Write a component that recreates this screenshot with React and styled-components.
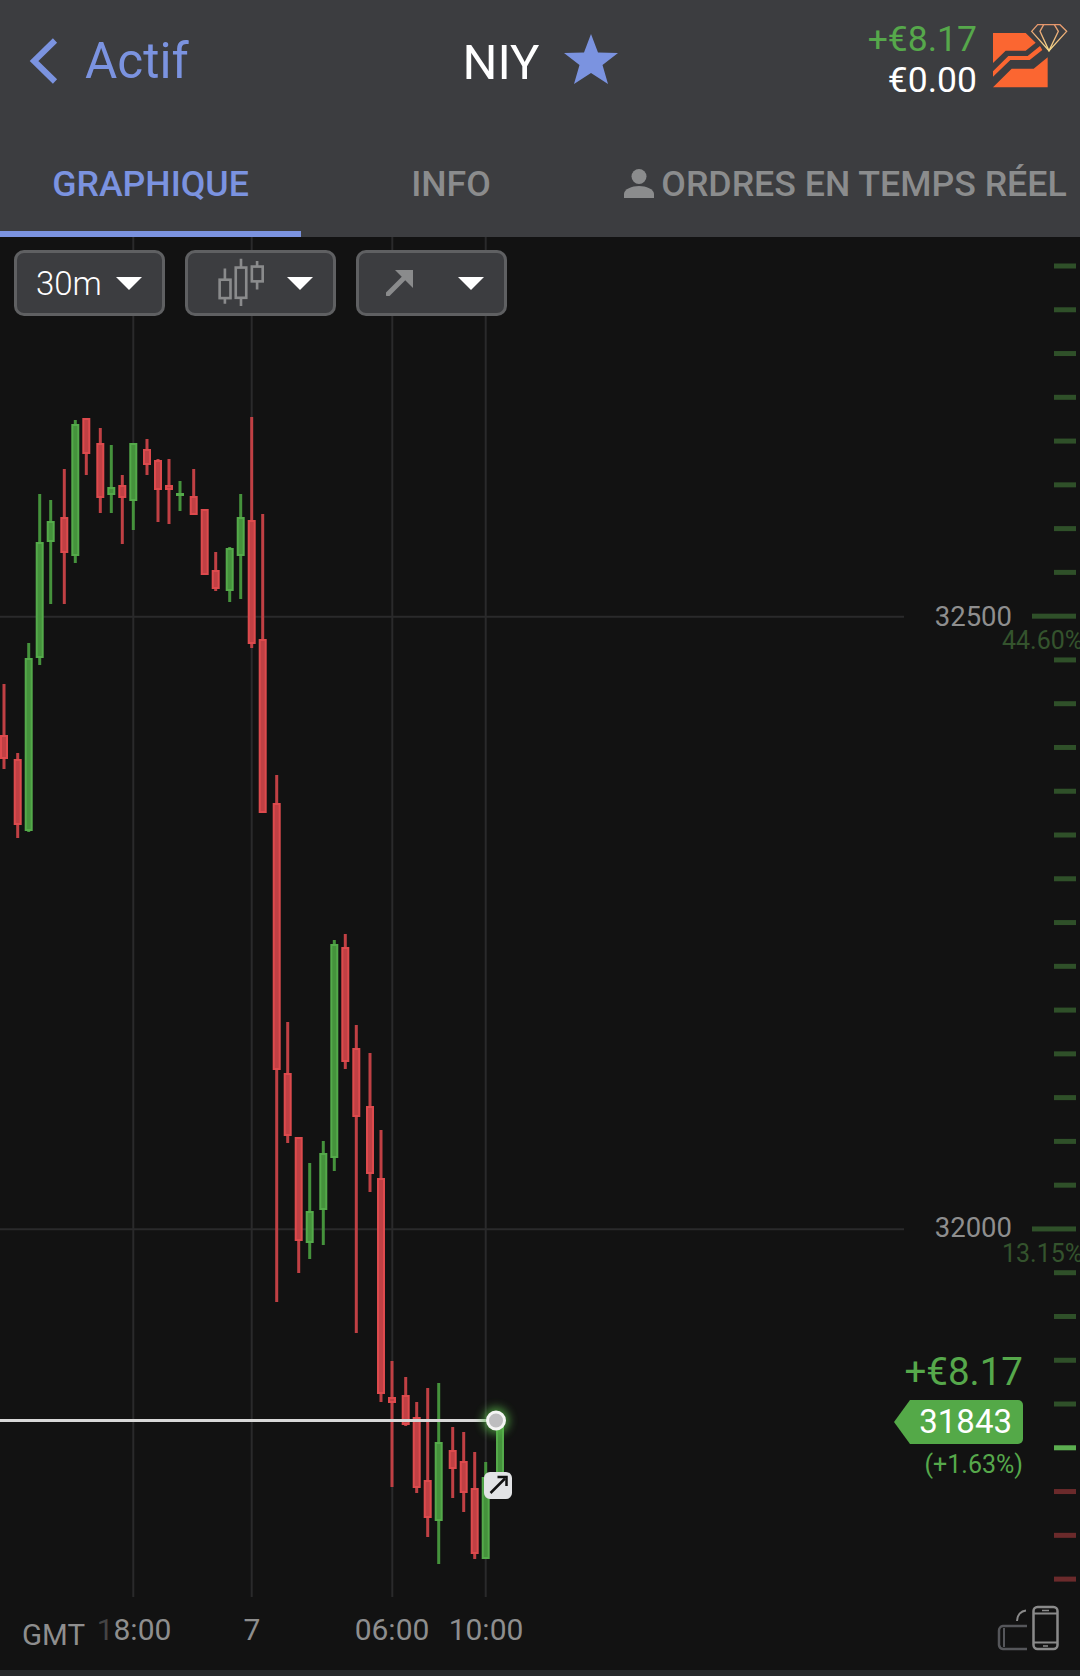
import styled, { createGlobalStyle } from "styled-components";

const CHART_TOP = 237;
const UP = { edge: "#54aa4a", fill: "#45923c" };
const DOWN = { edge: "#dd4a4d", fill: "#c04044" };

// x, wick top, wick bottom, body top, body bottom, up?
const CANDLES = [
  [4, 684, 769, 735, 759, 0],
  [17.7, 753, 838, 759, 825, 0],
  [28.7, 643, 832, 658, 831, 1],
  [39.7, 494, 665, 542, 658, 1],
  [50.7, 500, 604, 521, 542, 1],
  [64.3, 469, 604, 517, 553, 0],
  [75.3, 420, 563, 424, 556, 1],
  [86.3, 418, 475, 418, 454, 0],
  [100.3, 428, 513, 443, 498, 0],
  [111.3, 445, 513, 487, 495, 1],
  [122.3, 475, 544, 485, 498, 0],
  [133.3, 443, 530, 443, 501, 1],
  [147, 439, 475, 449, 465, 0],
  [158, 459, 522, 460, 490, 0],
  [169, 459, 524, 485, 490, 0],
  [180, 481, 511, 493, 496, 1],
  [193.7, 469, 515, 496, 515, 0],
  [204.7, 509, 575, 509, 575, 0],
  [215.7, 552, 591, 570, 589, 0],
  [229.7, 547, 602, 548, 591, 1],
  [240.7, 494, 599, 517, 556, 1],
  [251.7, 417, 648, 520, 644, 0],
  [262.7, 514, 813, 639, 813, 0],
  [276.7, 775, 1302, 803, 1070, 0],
  [287.7, 1022, 1143, 1073, 1136, 0],
  [298.7, 1137, 1273, 1137, 1241, 0],
  [309.7, 1163, 1259, 1211, 1243, 1],
  [323.3, 1141, 1245, 1153, 1210, 1],
  [334.3, 940, 1171, 944, 1158, 1],
  [345.3, 934, 1069, 947, 1062, 0],
  [356.3, 1025, 1333, 1048, 1117, 0],
  [370, 1053, 1192, 1106, 1174, 0],
  [381, 1130, 1402, 1178, 1394, 0],
  [392, 1361, 1487, 1397, 1403, 0],
  [405.7, 1377, 1426, 1395, 1425, 0],
  [416.7, 1402, 1493, 1417, 1488, 0],
  [427.7, 1388, 1537, 1480, 1518, 0],
  [438.7, 1383, 1564, 1442, 1521, 1],
  [452.7, 1427, 1498, 1450, 1469, 0],
  [463.7, 1432, 1512, 1461, 1493, 0],
  [474.7, 1452, 1559, 1488, 1554, 0],
  [485.7, 1462, 1559, 1477, 1559, 1],
  [500, 1420, 1480, 1420, 1480, 1],
];

const GRID_X = [133.3, 251.7, 392.3, 485.7];
const GRID_Y = [616.7, 1229.3];
const TICKS = Array.from({ length: 31 }, (_, i) => i);

const tickColor = (i) => {
  if (i === 27) return "#5cae50";
  return i > 27 ? "#6b2a2b" : "#2f5029";
};

const GlobalStyle = createGlobalStyle`
  html, body {
    margin: 0;
    padding: 0;
    background: #121212;
  }
  body {
    font-family: "Roboto", "Liberation Sans", sans-serif;
  }
`;

const Page = styled.div`
  width: 1080px;
  height: 1676px;
  display: flex;
  flex-direction: column;
  overflow: hidden;
`;

const TopBar = styled.header`
  height: 130px;
  box-sizing: border-box;
  padding-bottom: 8px;
  display: grid;
  grid-template-columns: 1fr auto 1fr;
  align-items: center;
  background: #3c3d40;
`;

const BackLink = styled.div`
  display: flex;
  align-items: center;
  gap: 27px;
  padding-left: 28px;
  font-size: 49.5px;
  color: #7b93e0;
`;

const Title = styled.div`
  display: flex;
  align-items: center;
  gap: 24px;
  padding-top: 2px;
  font-size: 49px;
  color: #fff;

  svg {
    margin-top: -6px;
  }
`;

const Account = styled.div`
  display: flex;
  justify-content: flex-end;
  align-items: center;
  gap: 8px;
  padding: 0 5px 10px 0;
`;

const Balances = styled.div`
  display: flex;
  flex-direction: column;
  align-items: flex-end;
  margin-top: 8px;
  font-size: 35.5px;
  line-height: 41.5px;
`;

const Balance = styled.span`
  color: ${(p) => (p.$gain ? "#56a84b" : "#fff")};
`;

const Tabs = styled.nav`
  height: 107px;
  display: grid;
  grid-template-columns: 301px 300px 1fr;
  background: #3c3d40;
`;

const Tab = styled.div`
  display: flex;
  align-items: center;
  justify-content: center;
  gap: 7px;
  box-sizing: border-box;
  padding-top: 6px;
  padding-left: ${(p) => (p.$pad ? "10px" : "0")};
  font-size: 35.7px;
  font-weight: 500;
  white-space: nowrap;
  color: ${(p) => (p.$active ? "#7b93e0" : "#8b8c8d")};
  border-bottom: 6px solid ${(p) => (p.$active ? "#7b93e0" : "transparent")};
`;

const Chart = styled.main`
  position: relative;
  flex: 1;
  overflow: hidden;
  background: #121212;
`;

const Plot = styled.svg`
  position: absolute;
  top: 0;
  left: 0;
  display: block;
`;

const Toolbar = styled.div`
  position: relative;
  display: flex;
  gap: 20px;
  padding: 13px 0 0 14px;
`;

const Picker = styled.div`
  width: 151px;
  height: 66px;
  box-sizing: border-box;
  display: flex;
  align-items: center;
  justify-content: space-between;
  padding: 0 20px 0 ${(p) => p.$left}px;
  border: 3px solid #5f6062;
  border-radius: 10px;
  background: #3c3d40;
  font-size: 33px;
  font-weight: 300;
  color: #fff;
`;

const Caret = styled.span`
  width: 0;
  height: 0;
  border-left: 13px solid transparent;
  border-right: 13px solid transparent;
  border-top: 13px solid #fff;
`;

const AxisPrice = styled.span`
  position: absolute;
  right: 68px;
  top: ${(p) => p.$y - CHART_TOP}px;
  transform: translateY(-50%);
  font-size: 27.5px;
  color: #8e8e8e;
`;

const AxisPercent = styled.span`
  position: absolute;
  left: 1002px;
  top: ${(p) => p.$y - CHART_TOP}px;
  transform: translateY(-50%);
  font-size: 25px;
  white-space: nowrap;
  color: #34532d;
`;

const TimeLabel = styled.span`
  position: absolute;
  left: ${(p) => p.$x}px;
  top: ${1629 - CHART_TOP}px;
  transform: translate(-50%, -50%);
  font-size: 30px;
  color: #8e8e8e;
`;

const Faded = styled.span`
  color: #444;
`;

const Zone = styled.span`
  position: absolute;
  left: 22px;
  top: ${1635 - CHART_TOP}px;
  transform: translateY(-50%);
  font-size: 29.5px;
  color: #8e8e8e;
`;

const Position = styled.div`
  position: absolute;
  right: 57px;
  top: ${1349 - CHART_TOP}px;
  display: flex;
  flex-direction: column;
  align-items: flex-end;
`;

const Profit = styled.span`
  font-size: 38.5px;
  line-height: 46px;
  color: #56a84b;
`;

const PriceTag = styled.span`
  position: relative;
  width: 113px;
  height: 44px;
  margin-top: 5px;
  box-sizing: border-box;
  padding: 0 11px 2px 0;
  display: flex;
  align-items: center;
  justify-content: flex-end;
  border-radius: 0 5px 5px 0;
  background: #54a948;
  font-size: 33px;
  color: #fff;

  &::before {
    content: "";
    position: absolute;
    right: 100%;
    top: 0;
    border-top: 22px solid transparent;
    border-bottom: 22px solid transparent;
    border-right: 16px solid #54a948;
  }
`;

const Change = styled.span`
  margin-top: 4px;
  font-size: 25px;
  line-height: 34px;
  color: #56a84b;
`;

const RotateIcon = styled.svg`
  position: absolute;
  left: 996px;
  top: ${1604 - CHART_TOP}px;
`;

const BottomStrip = styled.div`
  height: 6px;
  background: #27292b;
`;

const Candle = ({ x, wickTop, wickBottom, bodyTop, bodyBottom, up }) => {
  const tone = up ? UP : DOWN;
  return (
    <g>
      <line x1={x} x2={x} y1={wickTop} y2={wickBottom} stroke={tone.fill} strokeWidth="3" />
      <rect
        x={x - 3}
        y={bodyTop + 1}
        width="6"
        height={Math.max(bodyBottom - bodyTop - 2, 1)}
        fill={tone.fill}
        stroke={tone.edge}
        strokeWidth="2"
      />
    </g>
  );
};

const ChartDrawing = () => (
  <Plot width="1080" height="1433" viewBox={`0 ${CHART_TOP} 1080 1433`}>
    <defs>
      <filter id="glow" x="-100%" y="-100%" width="300%" height="300%">
        <feGaussianBlur stdDeviation="5" />
      </filter>
    </defs>
    {GRID_X.map((x) => (
      <line key={x} x1={x} x2={x} y1={CHART_TOP} y2="1597" stroke="#2a2a2b" strokeWidth="2" />
    ))}
    {GRID_Y.map((y) => (
      <line key={y} x1="0" x2="904" y1={y} y2={y} stroke="#2a2a2b" strokeWidth="2" />
    ))}
    {TICKS.map((i) => {
      const y = 266 + i * 43.77;
      const long = i === 8 || i === 22;
      return (
        <rect key={i} x={long ? 1032 : 1054} y={y - 2.5} width={long ? 44 : 22} height="5" fill={tickColor(i)} />
      );
    })}
    {CANDLES.map(([x, wickTop, wickBottom, bodyTop, bodyBottom, up]) => (
      <Candle
        key={x}
        x={x}
        wickTop={wickTop}
        wickBottom={wickBottom}
        bodyTop={bodyTop}
        bodyBottom={bodyBottom}
        up={up}
      />
    ))}
    <line x1="0" x2="490" y1="1420.5" y2="1420.5" stroke="#d8d8d8" strokeWidth="3" />
    <circle cx="496" cy="1420.5" r="13" fill="#58b84a" opacity="0.75" filter="url(#glow)" />
    <circle cx="496" cy="1420.5" r="8.5" fill="#bdbdbf" stroke="#f4f4f4" strokeWidth="3" />
    <rect x="484" y="1472" width="28" height="27" rx="6" fill="#e2e3e5" />
    <path d="M490.5 1493L505 1478.5" stroke="#111" strokeWidth="2.5" fill="none" />
    <path d="M497.5 1477H506.5V1486" stroke="#111" strokeWidth="2.5" fill="none" />
  </Plot>
);

const BackIcon = () => (
  <svg width="30" height="46" viewBox="0 0 30 46">
    <path d="M27 2.5L6 23L27 43.5" fill="none" stroke="#7b93e0" strokeWidth="6" />
  </svg>
);

const StarIcon = () => (
  <svg width="54" height="50" viewBox="0 0 54 50">
    <path d="M27 0L34 18.5L54 19L38.5 31L44 50L27 39L10 50L15.5 31L0 19L20 18.5Z" fill="#7b93e0" />
  </svg>
);

const BrandLogo = () => (
  <svg width="90" height="76" viewBox="0 0 270 228">
    <defs>
      <linearGradient id="gem" x1="0" x2="0" y1="0" y2="1">
        <stop offset="0" stopColor="#e5966c" />
        <stop offset="1" stopColor="#f7dc8c" />
      </linearGradient>
    </defs>
    <path d="M24 45H122L152 74L122 98H62L24 135Z" fill="#fb6631" />
    <path d="M24 160L70 114H128L165 84L172 96L134 126H76L24 176Z" fill="#fb6631" />
    <path d="M24 208L80 152H146L188 118V208Z" fill="#fb6631" />
    <g fill="none" stroke="url(#gem)" strokeWidth="4">
      <path d="M140 40L158 20H225L245 40L192 98Z" />
      <path d="M140 40H245" />
      <path d="M176 20L165 40L192 98L220 40L208 20" />
    </g>
  </svg>
);

const PersonIcon = () => (
  <svg width="30" height="29" viewBox="0 0 30 29">
    <circle cx="15" cy="7.5" r="7.5" fill="#8b8c8d" />
    <path d="M0 29V25C0 20 8 17 15 17S30 20 30 25V29Z" fill="#8b8c8d" />
  </svg>
);

const CandlesIcon = () => (
  <svg width="46" height="50" viewBox="54 27 140 150">
    <g fill="none" stroke="#8a8b8c" strokeWidth="8">
      <path d="M75 58V92M75 148V165" />
      <rect x="59" y="92" width="33" height="56" />
      <path d="M124 28V55M124 147V172" />
      <rect x="108" y="55" width="32" height="92" />
      <path d="M173 35V52M173 97V122" />
      <rect x="157" y="52" width="33" height="45" />
    </g>
  </svg>
);

const ArrowIcon = () => (
  <svg width="27" height="26" viewBox="0 0 27 26">
    <path d="M2 24L21 5" stroke="#8a8b8c" strokeWidth="5" strokeLinecap="round" />
    <path d="M9 0H27V18Z" fill="#8a8b8c" />
  </svg>
);

const DevicesIcon = () => (
  <RotateIcon width="64" height="48" viewBox="0 0 64 48">
    <rect x="37.5" y="3" width="24" height="42" rx="4" fill="none" stroke="#8a8a8a" strokeWidth="2.5" />
    <path d="M38 9.5H61M38 38.5H61" stroke="#8a8a8a" strokeWidth="2" />
    <path d="M46 6.5H53M47 42H52" stroke="#8a8a8a" strokeWidth="1.5" />
    <path d="M31 22H7A4.5 4.5 0 0 0 3 26.5V41A4.5 4.5 0 0 0 7 45H31" fill="none" stroke="#55565a" strokeWidth="2.5" />
    <path d="M8 24V43" stroke="#55565a" strokeWidth="2" />
    <path d="M21 17C21 11 25 7 30 6.5" fill="none" stroke="#8a8a8a" strokeWidth="2" />
  </RotateIcon>
);

export default function App() {
  return (
    <Page>
      <GlobalStyle />
      <TopBar>
        <BackLink>
          <BackIcon />
          Actif
        </BackLink>
        <Title>
          NIY
          <StarIcon />
        </Title>
        <Account>
          <Balances>
            <Balance $gain>+€8.17</Balance>
            <Balance>€0.00</Balance>
          </Balances>
          <BrandLogo />
        </Account>
      </TopBar>
      <Tabs>
        <Tab $active>GRAPHIQUE</Tab>
        <Tab>INFO</Tab>
        <Tab $pad>
          <PersonIcon />
          ORDRES EN TEMPS RÉEL
        </Tab>
      </Tabs>
      <Chart>
        <ChartDrawing />
        <Toolbar>
          <Picker $left={19}>
            30m
            <Caret />
          </Picker>
          <Picker $left={30}>
            <CandlesIcon />
            <Caret />
          </Picker>
          <Picker $left={27}>
            <ArrowIcon />
            <Caret />
          </Picker>
        </Toolbar>
        <AxisPrice $y={616}>32500</AxisPrice>
        <AxisPercent $y={640}>44.60%</AxisPercent>
        <AxisPrice $y={1227}>32000</AxisPrice>
        <AxisPercent $y={1253}>13.15%</AxisPercent>
        <Position>
          <Profit>+€8.17</Profit>
          <PriceTag>31843</PriceTag>
          <Change>(+1.63%)</Change>
        </Position>
        <Zone>GMT</Zone>
        <TimeLabel $x={134}>
          <Faded>1</Faded>8:00
        </TimeLabel>
        <TimeLabel $x={252}>7</TimeLabel>
        <TimeLabel $x={392}>06:00</TimeLabel>
        <TimeLabel $x={486}>10:00</TimeLabel>
        <DevicesIcon />
      </Chart>
      <BottomStrip />
    </Page>
  );
}
